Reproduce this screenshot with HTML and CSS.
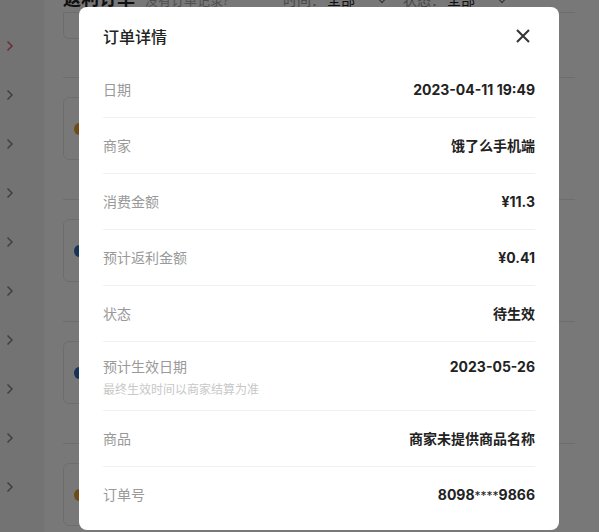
FILE: index.html
```html
<!DOCTYPE html>
<html lang="zh-CN">
<head>
    <meta charset="UTF-8">
    <title>返利订单</title>
    <link rel="stylesheet" href="styles.css">
</head>
<body>
<div class="page">
    <aside class="side">
        <div class="side-item on"><svg width="8" height="12" viewBox="0 0 8 12"><polyline points="1.5,1.5 6,6 1.5,10.5"/></svg></div>
        <div class="side-item"><svg width="8" height="12" viewBox="0 0 8 12"><polyline points="1.5,1.5 6,6 1.5,10.5"/></svg></div>
        <div class="side-item"><svg width="8" height="12" viewBox="0 0 8 12"><polyline points="1.5,1.5 6,6 1.5,10.5"/></svg></div>
        <div class="side-item"><svg width="8" height="12" viewBox="0 0 8 12"><polyline points="1.5,1.5 6,6 1.5,10.5"/></svg></div>
        <div class="side-item"><svg width="8" height="12" viewBox="0 0 8 12"><polyline points="1.5,1.5 6,6 1.5,10.5"/></svg></div>
        <div class="side-item"><svg width="8" height="12" viewBox="0 0 8 12"><polyline points="1.5,1.5 6,6 1.5,10.5"/></svg></div>
        <div class="side-item"><svg width="8" height="12" viewBox="0 0 8 12"><polyline points="1.5,1.5 6,6 1.5,10.5"/></svg></div>
        <div class="side-item"><svg width="8" height="12" viewBox="0 0 8 12"><polyline points="1.5,1.5 6,6 1.5,10.5"/></svg></div>
        <div class="side-item"><svg width="8" height="12" viewBox="0 0 8 12"><polyline points="1.5,1.5 6,6 1.5,10.5"/></svg></div>
        <div class="side-item"><svg width="8" height="12" viewBox="0 0 8 12"><polyline points="1.5,1.5 6,6 1.5,10.5"/></svg></div>
    </aside>
    <main class="main">
        <div class="top">
            <h2 class="top-title">返利订单</h2>
            <span class="top-tip">没有订单记录?</span>
            <span class="filter">时间：<b>全部</b><i class="caret"></i></span>
            <span class="filter">状态：<b>全部</b><i class="caret"></i></span>
        </div>
        <ul class="list">
            <li class="item first"><div class="card"></div></li>
            <li class="item"><div class="card"><span class="logo orange"></span></div></li>
            <li class="item"><div class="card"><span class="logo blue"></span></div></li>
            <li class="item"><div class="card"><span class="logo blue"></span></div></li>
            <li class="item"><div class="card"><span class="logo orange"></span></div></li>
        </ul>
    </main>
</div>

<div class="mask"></div>

<div class="dialog">
    <div class="dialog-head">
        <span class="dialog-title">订单详情</span>
        <svg class="close" width="16" height="16" viewBox="0 0 16 16"><path d="M2 2L14 14M14 2L2 14"/></svg>
    </div>
    <div class="row">
        <span class="label">日期</span>
        <span class="value">2023-04-11 19:49</span>
    </div>
    <div class="row">
        <span class="label">商家</span>
        <span class="value">饿了么手机端</span>
    </div>
    <div class="row">
        <span class="label">消费金额</span>
        <span class="value">¥11.3</span>
    </div>
    <div class="row">
        <span class="label">预计返利金额</span>
        <span class="value">¥0.41</span>
    </div>
    <div class="row">
        <span class="label">状态</span>
        <span class="value">待生效</span>
    </div>
    <div class="row tall">
        <div>
            <div class="label">预计生效日期</div>
            <div class="sub">最终生效时间以商家结算为准</div>
        </div>
        <span class="value">2023-05-26</span>
    </div>
    <div class="row">
        <span class="label">商品</span>
        <span class="value">商家未提供商品名称</span>
    </div>
    <div class="row last">
        <span class="label">订单号</span>
        <span class="value">8098<span class="star">****</span>9866</span>
    </div>
</div>
</body>
</html>
```

FILE: styles.css
```css
* {
    box-sizing: border-box;
}

body {
    margin: 0;
    background: #fff;
    font-family: "Open Sans", "Noto Sans CJK SC", sans-serif;
    overflow: hidden;
    height: 532px;
}

.page {
    display: flex;
    height: 532px;
}

.side {
    width: 44px;
    background: #f5f5f5;
    padding-top: 21px;
}

.side-item {
    height: 49px;
    display: flex;
    align-items: center;
    padding-left: 6px;
}

.side-item svg polyline {
    fill: none;
    stroke: #888;
    stroke-width: 1.5;
}

.side-item.on svg polyline {
    stroke: #e0606a;
}

.main {
    flex: 1;
    padding-left: 19px;
    padding-right: 24px;
}

.top {
    display: flex;
    align-items: baseline;
    height: 33px;
    margin-top: -20px;
    padding-top: 4px;
    border-bottom: 1px solid #e8e8e8;
}

.top-title {
    margin: 0;
    font-size: 18px;
    font-weight: bold;
    color: #222;
}

.top-tip {
    margin-left: 10px;
    width: 138px;
    font-size: 13px;
    color: #aaa;
}

.filter {
    font-size: 14px;
    color: #999;
    margin-right: 18px;
}

.filter b {
    color: #222;
    font-weight: normal;
    margin-left: 2px;
}

.caret {
    display: inline-block;
    width: 6px;
    height: 6px;
    border-right: 1.5px solid #666;
    border-bottom: 1.5px solid #666;
    transform: rotate(45deg);
    margin-left: 24px;
    vertical-align: 3px;
}

.list {
    list-style: none;
    margin: 0;
    padding: 0;
}

.item {
    height: 122px;
    padding-top: 19px;
    border-bottom: 1px solid #e8e8e8;
}

.item.first {
    height: 65px;
    padding-top: 0;
}

.card {
    height: 63px;
    border: 1px solid #e8e8e8;
    border-radius: 6px;
    width: 460px;
    display: flex;
    align-items: center;
    padding-left: 10px;
}

.item.first .card {
    height: 26px;
    border-top: 0;
    border-radius: 0 0 6px 6px;
}

.logo {
    width: 10px;
    height: 12px;
    border-radius: 50%;
}

.logo.orange {
    background: #f0a030;
}

.logo.blue {
    background: #2d6fb8;
}

.mask {
    position: fixed;
    inset: 0;
    background: rgba(0, 0, 0, 0.53);
}

.dialog {
    position: fixed;
    left: 79px;
    top: 7px;
    width: 480px;
    height: 523px;
    background: #fff;
    border-radius: 8px;
    padding: 0 24px;
}

.dialog-head {
    height: 55px;
    display: flex;
    align-items: center;
    justify-content: space-between;
    padding-top: 2px;
}

.dialog-title {
    font-size: 16px;
    font-weight: 500;
    color: #222;
}

.close {
    margin-right: 4px;
}

.close path {
    stroke: #333;
    stroke-width: 2;
}

.row {
    display: flex;
    justify-content: space-between;
    align-items: flex-start;
    padding: 18px 0 17px;
    border-bottom: 1px solid #f0f0f0;
    line-height: 20px;
}

.row.tall {
    padding: 15px 0 11px;
}

.row.last {
    border-bottom: 0;
}

.label {
    font-size: 14px;
    color: #999;
}

.sub {
    margin-top: 4px;
    font-size: 12px;
    line-height: 18px;
    color: #c8c8c8;
}

.value {
    font-family: Inter, "Noto Sans CJK SC", sans-serif;
    font-size: 14px;
    font-weight: bold;
    color: #222;
}

.star {
    font-size: 12px;
    font-weight: normal;
}
```
